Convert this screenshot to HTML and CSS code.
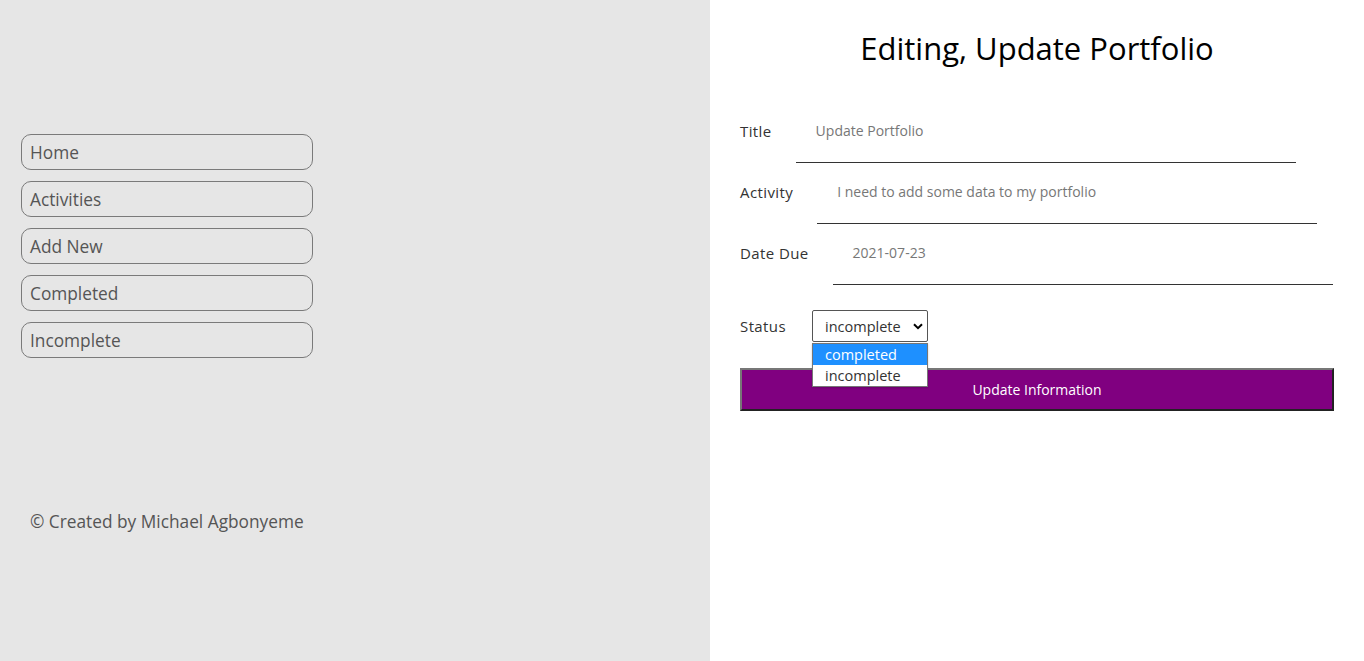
FILE: index.html
```html
<!DOCTYPE html>
<html>
<head>
<meta charset="utf-8">
<link rel="stylesheet" href="styles.css">
</head>
<body>
<aside class="side">
  <nav class="nav">
    <a class="nav-btn">Home</a>
    <a class="nav-btn">Activities</a>
    <a class="nav-btn">Add New</a>
    <a class="nav-btn">Completed</a>
    <a class="nav-btn">Incomplete</a>
  </nav>
  <footer class="credit">© Created by Michael Agbonyeme</footer>
</aside>
<main class="main">
  <h1 class="title">Editing, Update Portfolio</h1>
  <form class="form">
    <div class="row"><label class="lbl">Title</label><div class="field">Update Portfolio</div></div>
    <div class="row"><label class="lbl">Activity</label><div class="field">I need to add some data to my portfolio</div></div>
    <div class="row"><label class="lbl">Date Due</label><div class="field">2021-07-23</div></div>
    <div class="status-row">
      <label class="lbl">Status</label>
      <div class="select-wrap">
        <div class="select"><span>incomplete</span>
          <svg class="chev" width="10" height="7" viewBox="0 0 10 7"><path d="M1 1.2 L5 5.2 L9 1.2" fill="none" stroke="#000" stroke-width="2"/></svg>
        </div>
        <ul class="options">
          <li class="opt active">completed</li>
          <li class="opt">incomplete</li>
        </ul>
      </div>
    </div>
    <button class="submit" type="button">Update Information</button>
  </form>
</main>
</body>
</html>
```
FILE: styles.css
```css
* { box-sizing: border-box; }
html, body { margin: 0; padding: 0; }
body {
  display: flex;
  width: 1364px;
  height: 661px;
  font-family: "Open Sans", "DejaVu Sans", sans-serif;
  overflow: hidden;
}
.side {
  width: 710px;
  background: #e6e6e6;
  padding: 134px 0 0 21px;
  display: flex;
  flex-direction: column;
}
.nav {
  display: flex;
  flex-direction: column;
  gap: 11px;
  width: 292px;
}
.nav-btn {
  display: flex;
  align-items: center;
  height: 36px;
  border: 1px solid #7a7a7a;
  border-radius: 10px;
  padding-left: 8px;
  font-size: 17.3px;
  color: #555;
}
.credit {
  margin-top: 152px;
  padding-left: 9px;
  font-size: 17.3px;
  color: #555;
}
.main {
  flex: 1;
  background: #fff;
  padding: 28px 30px 0 30px;
}
.title {
  margin: 0;
  text-align: center;
  font-weight: 400;
  font-size: 31px;
  line-height: 40px;
  color: #000;
}
.form {
  margin-top: 53px;
}
.row {
  display: flex;
  align-items: flex-start;
  height: 61px;
}
.lbl {
  font-size: 15px;
  letter-spacing: 0.4px;
  color: #333;
  line-height: 20px;
}
.field {
  margin-left: 24px;
  width: 500px;
  height: 42px;
  border-bottom: 1px solid #333;
  padding-left: 20px;
  font-size: 14px;
  color: #777;
  line-height: 20px;
}
.status-row {
  display: flex;
  align-items: center;
  margin-top: 6px;
  height: 32px;
}
.status-row .lbl { width: 72px; }
.select-wrap { position: relative; }
.select {
  width: 116px;
  height: 32px;
  border: 1px solid #555;
  border-radius: 2px;
  display: flex;
  align-items: center;
  justify-content: space-between;
  padding: 0 4px 0 12px;
  font-size: 14.5px;
  color: #333;
}
.chev { margin-top: 1px; }
.options {
  position: absolute;
  left: 0;
  top: 33px;
  margin: 0;
  padding: 0;
  list-style: none;
  width: 116px;
  border: 1px solid #767676;
  background: #fff;
  z-index: 2;
  box-shadow: 0 1px 2px rgba(0,0,0,0.2);
}
.opt {
  height: 21px;
  line-height: 21px;
  padding-left: 12px;
  font-size: 14.5px;
  color: #333;
}
.opt.active { background: #1e90ff; color: #fff; }
.submit {
  display: block;
  margin-top: 26px;
  width: 594px;
  height: 43px;
  background: #800080;
  color: #fff;
  font-family: inherit;
  font-size: 14px;
  border: 2px solid;
  border-color: #777 #222 #222 #777;
}
```
